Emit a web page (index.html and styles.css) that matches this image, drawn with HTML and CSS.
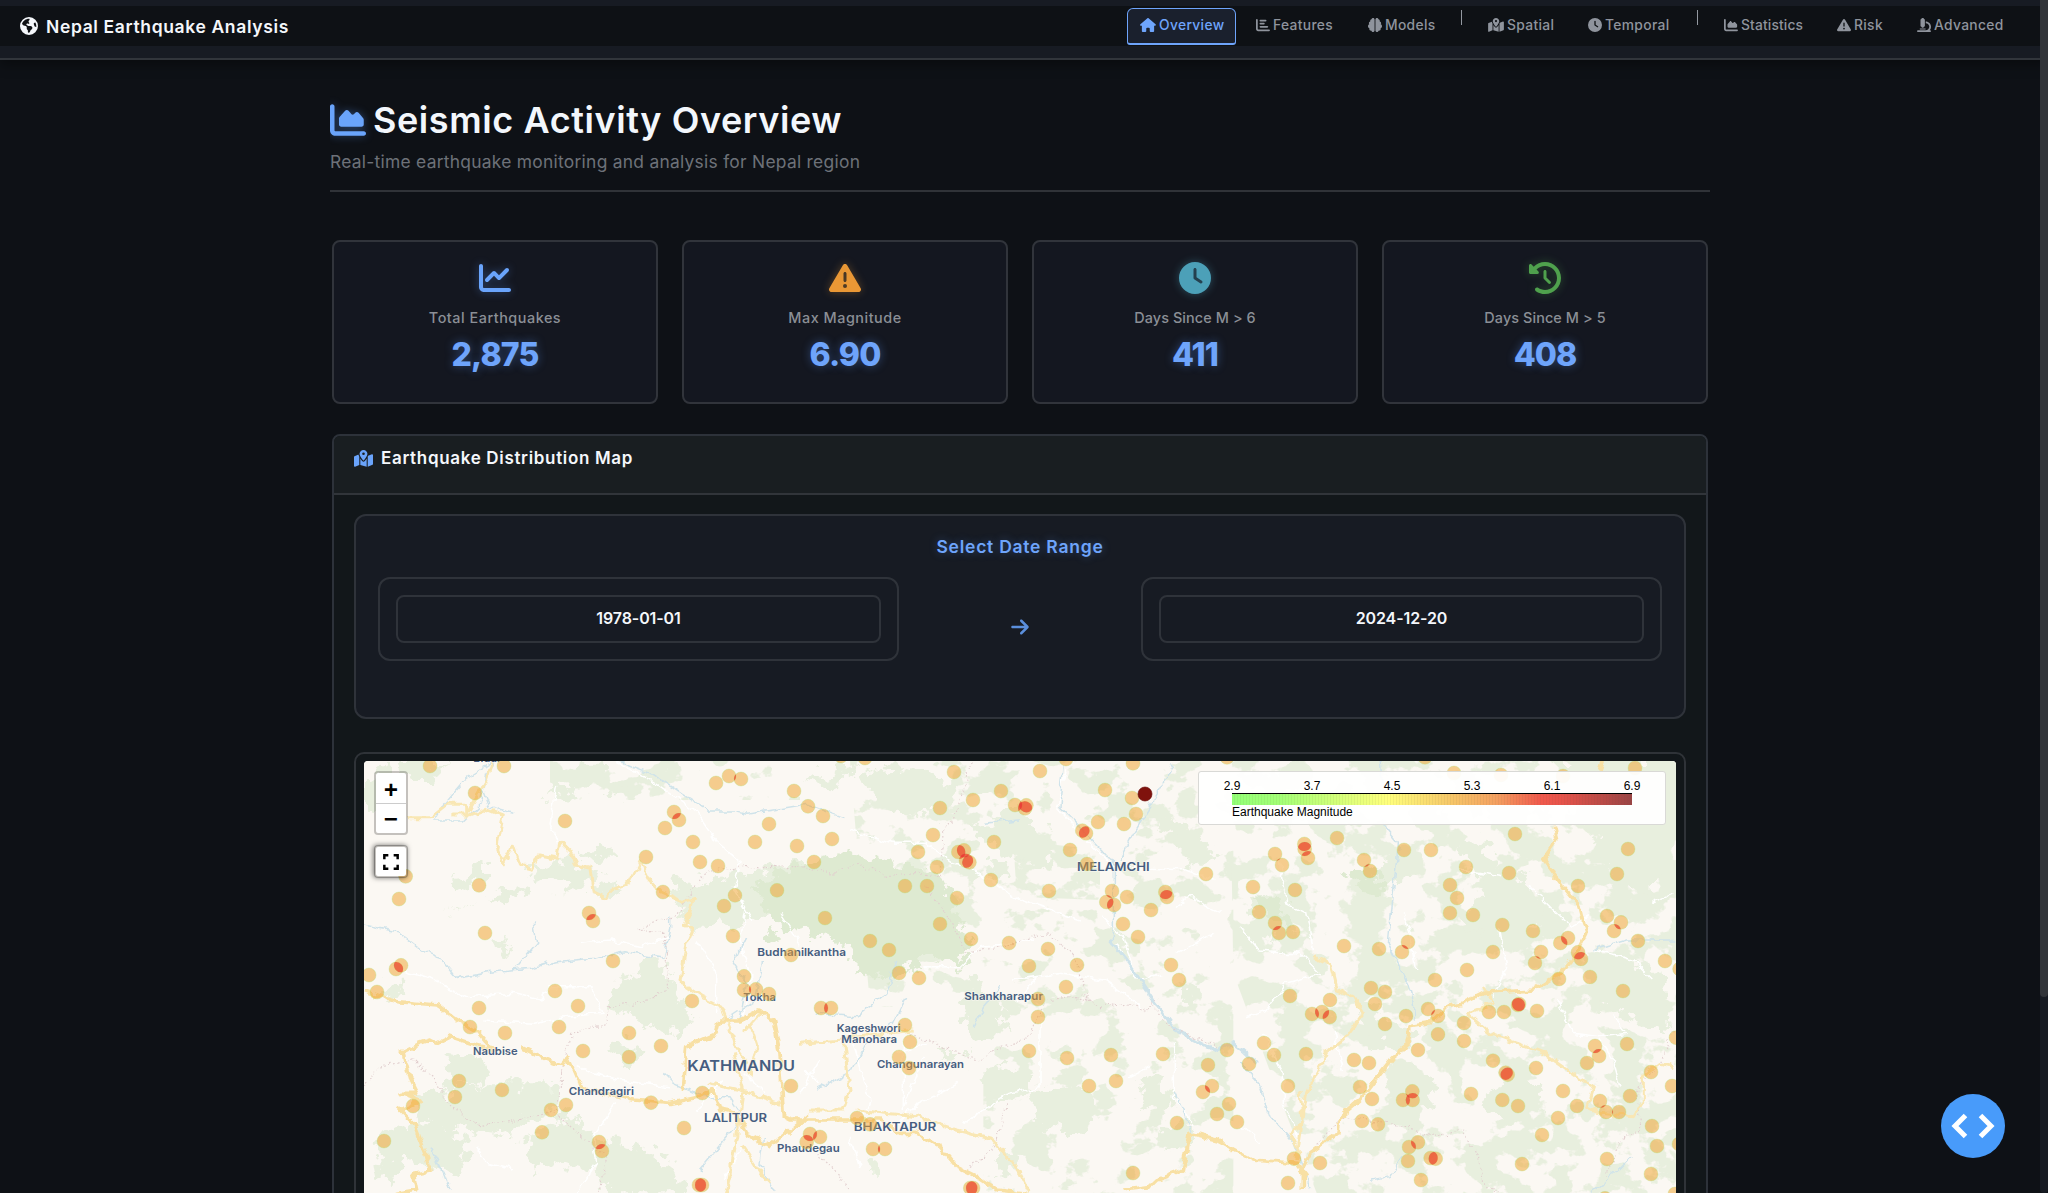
FILE: index.html
```html
<!DOCTYPE html>
<html lang="en">
<head>
<meta charset="utf-8">
<title>Nepal Earthquake Analysis</title>
<link rel="stylesheet" href="styles.css">
</head>
<body>
<svg class="sprite" aria-hidden="true">
  <symbol id="i-earth" viewBox="0 0 512 512"><path d="M57.7 193l9.4 16.4c8.3 14.5 21.9 25.2 38 29.8L163 255.7c17.2 4.9 29 20.6 29 38.5v39.9c0 11 6.2 21 16 25.9s16 14.9 16 25.9v39c0 15.6 14.9 26.9 29.9 22.6c16.1-4.6 28.6-17.5 32.7-33.8l2.8-11.2c4.2-16.9 15.2-31.4 30.3-40l8.1-4.6c15-8.5 24.2-24.5 24.2-41.7v-8.3c0-12.7-5.1-24.9-14.1-33.9l-3.9-3.9c-9-9-21.2-14.1-33.9-14.1H257c-11.1 0-22.1-2.9-31.8-8.4l-34.5-19.7c-4.3-2.5-7.6-6.5-9.2-11.2c-3.2-9.6 1.1-20 10.2-24.5l5.9-3c6.6-3.3 14.3-3.9 21.3-1.5l23.2 7.7c8.2 2.7 17.2-.4 21.9-7.5c4.7-7 4.2-16.3-1.2-22.8l-13.6-16.3c-10-12-9.9-29.5 .3-41.3l15.7-18.3c8.8-10.3 10.2-25 3.5-36.7l-2.4-4.2c-3.5-.2-6.9-.3-10.4-.3C163.1 48 84.4 108.9 57.7 193zM464 256c0-36.8-9.6-71.4-26.4-101.5L412 164.8c-15.7 6.3-23.8 23.8-18.5 39.8l16.9 50.7c3.5 10.4 12 18.3 22.6 20.9l29.1 7.3c1.2-9 1.8-18.2 1.8-27.5zM0 256a256 256 0 1 1 512 0A256 256 0 1 1 0 256z"/></symbol>
  <symbol id="i-house" viewBox="0 0 576 512"><path d="M575.8 255.5c0 18-15 32.1-32 32.1l-32 0 .7 160.2c0 2.7-.2 5.4-.5 8.1l0 16.2c0 22.1-17.9 40-40 40l-16 0c-1.1 0-2.2 0-3.3-.1c-1.4 .1-2.8 .1-4.2 .1L416 512l-24 0c-22.1 0-40-17.9-40-40l0-24 0-64c0-17.7-14.3-32-32-32l-64 0c-17.7 0-32 14.3-32 32l0 64 0 24c0 22.1-17.9 40-40 40l-24 0-31.9 0c-1.5 0-3-.1-4.5-.2c-1.2 .1-2.4 .2-3.6 .2l-16 0c-22.1 0-40-17.9-40-40l0-112c0-.9 0-1.9 .1-2.8l0-69.7-32 0c-18 0-32-14-32-32.1c0-9 3-17 10-24L266.4 8c7-7 15-8 22-8s15 2 21 7L564.8 231.5c8 7 12 15 11 24z"/></symbol>
  <symbol id="i-bar" viewBox="0 0 512 512"><path d="M32 32c17.7 0 32 14.3 32 32V400c0 8.8 7.2 16 16 16H480c17.7 0 32 14.3 32 32s-14.3 32-32 32H80c-44.2 0-80-35.8-80-80V64C0 46.3 14.3 32 32 32zm96 64c0-17.7 14.3-32 32-32l192 0c17.7 0 32 14.3 32 32s-14.3 32-32 32H160c-17.7 0-32-14.3-32-32zm32 80H288c17.7 0 32 14.3 32 32s-14.3 32-32 32H160c-17.7 0-32-14.3-32-32s14.3-32 32-32zm0 112H416c17.7 0 32 14.3 32 32s-14.3 32-32 32H160c-17.7 0-32-14.3-32-32s14.3-32 32-32z"/></symbol>
  <symbol id="i-brain" viewBox="0 0 512 512"><path d="M184 0c30.9 0 56 25.1 56 56V456c0 30.9-25.1 56-56 56c-28.9 0-52.7-21.9-55.7-50.1c-5.2 1.4-10.7 2.1-16.3 2.1c-35.3 0-64-28.7-64-64c0-7.4 1.3-14.6 3.6-21.2C21.4 367.4 0 338.2 0 304c0-31.9 18.7-59.5 45.8-72.3C37.1 220.8 32 207 32 192c0-30.7 21.6-56.3 50.4-62.6C80.8 123.9 80 118 80 112c0-29.9 20.6-55.1 48.3-62.1C131.3 21.9 155.1 0 184 0zM328 0c28.9 0 52.6 21.9 55.7 49.9c27.8 7 48.3 32.1 48.3 62.1c0 6-.8 11.9-2.4 17.4c28.8 6.2 50.4 31.9 50.4 62.6c0 15-5.1 28.8-13.8 39.7C493.3 244.5 512 272.1 512 304c0 34.2-21.4 63.4-51.6 74.8c2.3 6.6 3.6 13.8 3.6 21.2c0 35.3-28.7 64-64 64c-5.6 0-11.1-.7-16.3-2.1c-3 28.2-26.8 50.1-55.7 50.1c-30.9 0-56-25.1-56-56V56c0-30.9 25.1-56 56-56z"/></symbol>
  <symbol id="i-map" viewBox="0 0 576 512"><path d="M408 120c0 54.6-73.1 151.9-105.2 192c-7.7 9.6-22 9.6-29.6 0C241.1 271.9 168 174.6 168 120C168 53.7 221.7 0 288 0s120 53.7 120 120zm8 80.4c3.5-6.9 6.7-13.8 9.6-20.6c.5-1.2 1-2.5 1.5-3.7l116-46.4C558.9 123.4 576 135 576 152V422.8c0 9.8-6 18.6-15.1 22.3L416 503V200.4zM137.6 138.3c2.4 14.1 7.2 28.3 12.8 41.5c2.9 6.8 6.1 13.7 9.6 20.6V451.8L32.9 502.7C17.1 509 0 497.4 0 480.4V209.6c0-9.8 6-18.6 15.1-22.3l122.6-49zM327.8 332c13.9-17.4 35.7-45.7 56.2-77V504.3L192 449.4V255c20.5 31.3 42.3 59.6 56.2 77c20.5 25.6 59.1 25.6 79.6 0zM288 152a40 40 0 1 0 0-80 40 40 0 1 0 0 80z"/></symbol>
  <symbol id="i-clock" viewBox="0 0 512 512"><path d="M256 0a256 256 0 1 1 0 512A256 256 0 1 1 256 0zM232 120V256c0 8 4 15.5 10.7 20l96 64c11 7.4 25.9 4.4 33.3-6.7s4.4-25.9-6.7-33.3L280 243.2V120c0-13.3-10.7-24-24-24s-24 10.7-24 24z"/></symbol>
  <symbol id="i-area" viewBox="0 0 512 512"><path d="M64 64c0-17.7-14.3-32-32-32S0 46.3 0 64L0 400c0 44.2 35.8 80 80 80l400 0c17.7 0 32-14.3 32-32s-14.3-32-32-32L80 416c-8.8 0-16-7.2-16-16L64 64zm96 288H448c17.7 0 32-14.3 32-32V251.8c0-7.6-2.7-15-7.7-20.8l-65.8-76.8c-12.1-14.2-33.7-15-46.9-1.8l-21 21c-10 10-26.4 9.2-35.4-1.6l-39.2-47c-12.6-15.1-35.7-15.4-48.7-.6L135.9 215c-5.1 5.8-7.9 13.3-7.9 21.1v84c0 17.7 14.3 32 32 32z"/></symbol>
  <symbol id="i-warn" viewBox="0 0 512 512"><path d="M256 32c14.2 0 27.3 7.5 34.5 19.8l216 368c7.3 12.4 7.3 27.7 .2 40.1S486.3 480 472 480H40c-14.3 0-27.6-7.7-34.7-20.1s-7-27.8 .2-40.1l216-368C228.7 39.5 241.8 32 256 32zm0 128c-13.3 0-24 10.7-24 24V296c0 13.3 10.7 24 24 24s24-10.7 24-24V184c0-13.3-10.7-24-24-24zm32 224a32 32 0 1 0 -64 0 32 32 0 1 0 64 0z"/></symbol>
  <symbol id="i-scope" viewBox="0 0 512 512"><path d="M160 32c0-17.7 14.3-32 32-32h32c17.7 0 32 14.3 32 32c17.7 0 32 14.3 32 32V288c0 17.7-14.3 32-32 32c0 17.7-14.3 32-32 32H192c-17.7 0-32-14.3-32-32c-17.7 0-32-14.3-32-32V64c0-17.7 14.3-32 32-32zM32 448H320c70.7 0 128-57.3 128-128s-57.3-128-128-128V128c106 0 192 86 192 192c0 49.2-18.5 94-48.9 128H480c17.7 0 32 14.3 32 32s-14.3 32-32 32H320 32c-17.7 0-32-14.3-32-32s14.3-32 32-32zm80-64H304c8.8 0 16 7.2 16 16s-7.2 16-16 16H112c-8.8 0-16-7.2-16-16s7.2-16 16-16z"/></symbol>
  <symbol id="i-line" viewBox="0 0 512 512"><path d="M64 64c0-17.7-14.3-32-32-32S0 46.3 0 64V400c0 44.2 35.8 80 80 80H480c17.7 0 32-14.3 32-32s-14.3-32-32-32H80c-8.8 0-16-7.2-16-16V64zm406.6 86.6c12.5-12.5 12.5-32.8 0-45.3s-32.8-12.5-45.3 0L320 210.7l-57.4-57.4c-12.5-12.5-32.8-12.5-45.3 0l-112 112c-12.5 12.5-12.5 32.8 0 45.3s32.8 12.5 45.3 0L240 221.3l57.4 57.4c12.5 12.5 32.8 12.5 45.3 0l128-128z"/></symbol>
  <symbol id="i-history" viewBox="0 0 512 512"><path d="M75 75L41 41C25.9 25.9 0 36.6 0 57.9V168c0 13.3 10.7 24 24 24H134.1c21.4 0 32.1-25.9 17-41l-30.8-30.8C155 85.5 203 64 256 64c106 0 192 86 192 192s-86 192-192 192c-40.8 0-78.6-12.7-109.7-34.4c-14.5-10.1-34.4-6.6-44.6 7.9s-6.6 34.4 7.9 44.6C151.2 495 201.7 512 256 512c141.4 0 256-114.6 256-256S397.4 0 256 0C185.3 0 121.3 28.7 75 75zm181 53c-13.3 0-24 10.7-24 24V256c0 6.4 2.5 12.5 7 17l72 72c9.4 9.4 24.6 9.4 33.9 0s9.4-24.6 0-33.9l-65-65V152c0-13.3-10.7-24-24-24z"/></symbol>
  <symbol id="i-arrow" viewBox="0 0 448 512"><path d="M438.6 278.6c12.5-12.5 12.5-32.8 0-45.3l-160-160c-12.5-12.5-32.8-12.5-45.3 0s-12.5 32.8 0 45.3L338.8 224 32 224c-17.7 0-32 14.3-32 32s14.3 32 32 32l306.7 0L233.4 393.4c-12.5 12.5-12.5 32.8 0 45.3s32.8 12.5 45.3 0l160-160z"/></symbol>
</svg>

<header class="topbar">
  <div class="topbar-row">
    <div class="brand"><svg class="ic"><use href="#i-earth"/></svg><span>Nepal Earthquake Analysis</span></div>
    <nav class="menu">
      <a class="item active w-overview"><svg class="ic wide"><use href="#i-house"/></svg>Overview</a>
      <a class="item w-features"><svg class="ic"><use href="#i-bar"/></svg>Features</a>
      <a class="item w-models"><svg class="ic"><use href="#i-brain"/></svg>Models</a>
      <span class="sep"></span>
      <a class="item w-spatial"><svg class="ic wide"><use href="#i-map"/></svg>Spatial</a>
      <a class="item w-temporal"><svg class="ic"><use href="#i-clock"/></svg>Temporal</a>
      <span class="sep"></span>
      <a class="item w-statistics"><svg class="ic"><use href="#i-area"/></svg>Statistics</a>
      <a class="item w-risk"><svg class="ic"><use href="#i-warn"/></svg>Risk</a>
      <a class="item w-advanced"><svg class="ic"><use href="#i-scope"/></svg>Advanced</a>
    </nav>
  </div>
</header>

<main class="page">
  <section class="heading">
    <h1><svg class="ic"><use href="#i-area"/></svg>Seismic Activity Overview</h1>
    <p>Real-time earthquake monitoring and analysis for Nepal region</p>
  </section>

  <section class="stats">
    <article class="stat"><svg class="ic blue"><use href="#i-line"/></svg><h2>Total Earthquakes</h2><strong>2,875</strong></article>
    <article class="stat"><svg class="ic orange"><use href="#i-warn"/></svg><h2>Max Magnitude</h2><strong>6.90</strong></article>
    <article class="stat"><svg class="ic teal"><use href="#i-clock"/></svg><h2 class="tight">Days Since M &gt; 6</h2><strong>411</strong></article>
    <article class="stat"><svg class="ic green"><use href="#i-history"/></svg><h2 class="tight">Days Since M &gt; 5</h2><strong>408</strong></article>
  </section>

  <section class="panel">
    <h3 class="panel-head"><svg class="ic"><use href="#i-map"/></svg>Earthquake Distribution Map</h3>
    <div class="panel-body">
      <div class="range">
        <h4>Select Date Range</h4>
        <div class="range-row">
          <div class="date-wrap"><div class="date">1978-01-01</div></div>
          <svg class="ic arrow"><use href="#i-arrow"/></svg>
          <div class="date-wrap"><div class="date">2024-12-20</div></div>
        </div>
      </div>
      <div class="map-frame">
        <div class="map">
          <svg class="tiles" viewBox="42 63 3936 1296" preserveAspectRatio="xMinYMin slice">
            <defs>
              <filter id="rough" filterUnits="userSpaceOnUse" x="-60" y="-40" width="4140" height="1500" color-interpolation-filters="sRGB">
                <feTurbulence type="fractalNoise" baseFrequency="0.022" numOctaves="4" seed="4"/>
                <feDisplacementMap in="SourceGraphic" scale="95" xChannelSelector="R" yChannelSelector="G"/>
              </filter>
              <filter id="wiggle" filterUnits="userSpaceOnUse" x="-60" y="-40" width="4140" height="1500" color-interpolation-filters="sRGB">
                <feTurbulence type="fractalNoise" baseFrequency="0.035" numOctaves="2" seed="9"/>
                <feDisplacementMap in="SourceGraphic" scale="26" xChannelSelector="R" yChannelSelector="G"/>
              </filter>
              <filter id="woodDense" filterUnits="userSpaceOnUse" x="42" y="63" width="3939" height="1296" color-interpolation-filters="sRGB">
                <feTurbulence type="fractalNoise" baseFrequency="0.009 0.011" numOctaves="5" seed="21" result="n"/>
                <feColorMatrix type="matrix" values="0 0 0 0 .91  0 0 0 0 .937  0 0 0 0 .871  0 0 0 24 -11.9"/>
                <feComposite in2="SourceGraphic" operator="in"/>
              </filter>
              <filter id="woodSparse" filterUnits="userSpaceOnUse" x="42" y="63" width="3939" height="1296" color-interpolation-filters="sRGB">
                <feTurbulence type="fractalNoise" baseFrequency="0.009 0.012" numOctaves="5" seed="7" result="n"/>
                <feColorMatrix type="matrix" values="0 0 0 0 .91  0 0 0 0 .937  0 0 0 0 .871  0 0 0 24 -13.7"/>
                <feComposite in2="SourceGraphic" operator="in"/>
              </filter>
            </defs>
            <rect x="42" y="63" width="3939" height="1296" fill="#fbf8f3"/>
            <!-- scattered woodland -->
            <path filter="url(#woodSparse)" d="M1500 63H2650V1359H1900V800H1560ZM600 63H1350V180H600Z"/>
            <path filter="url(#woodDense)" d="M2640 63H3981V1359H2900L2800 1100L2650 700ZM1990 300L2250 330V480L2000 470Z"/>
            <!-- woodland -->
            <g fill="#e8efde" filter="url(#rough)">
              <path d="M170 63h130l-60 60h-80zM42 110l60-40 20 50-50 80-30 20zM690 80l60 0 60 50 40 50-60-20-80-40-60-10zM690 170l-110 10 60-50zM300 420l80-30 40-20 0 50-100 30zM290 510l100-25-60 20zM420 465l80-30 40 20-60 30zM510 385l130-25 130 40-90 45-90-10zM700 340l100-15 0 25-90 10zM720 460l90-30 0 30-60 20zM430 610l30 0 5 20-30 5z"/>
              <path d="M960 430l190-20 200-40v130l-230 60-100 10-30-80zM820 720l100-60 40 40 20 50 60 90-40 40-80-20-80-30-60-40zM780 930l60-20 50 30-50 40zM90 740l60 0 10 30-60 10zM290 950l90-20 40 70-20 30-110 10zM200 1080l120-40 100-10 190 0v90l-160 60-220-20zM80 1180l160-40 120 60-40 100-160-40-60 90zM520 1200l140-80 100 80 120 20 80 60 60 80-220 0-60-60-120-40-60 40z"/>
              <path d="M1350 380l110-40 180 40 80 50-40 60-330 30zM1550 90l160-10 120 70-60 80-100-10-130-50zM1370 110l160-30-80 70zM1870 260l130-60 60 60 60 60-40 60-120-40zM1900 370l90 0-10 40-80-10zM1870 860l70-40 40 60-90 20zM1870 1000l110-20 60 30 0 60-100 10zM2040 1060l140-30 80 60-60 90-130-10zM2360 1050l60-30 60 70-60 30zM2440 1160l80-10 0 60-70 20zM2500 700l40 60-20 60-30-50zM2420 220l120 60 60 60-60 40-60-60zM1740 930l110 0-50 30zM1850 710l60 40 60 80-80 60-60-50zM1930 1230l70 0 0 60-60 20zM1560 1250l40 60-50 0z"/>
              <path d="M3330 300l60-10 60 100 80 20 40 100-30 70-140 30-60-60 50-90zM3620 63h340l0 330-80 80-110-90-70-160-80-60zM3700 640l240 60 20 180-120-40-110-60zM3100 980l90 0 70 60 0 80-110-10zM3030 790l80 40 90 60-30 40-110-10zM3470 1020l90 0 20 90-110 30-90-50zM3080 390l90-60 20 90-110 20zM2700 470l80 0 70 80-30 60-100-30z"/>
            </g>
            <!-- Shivapuri national park -->
            <g fill="#deead1" filter="url(#rough)">
              <path d="M1220 430l70-30 160-60 140 20 140 20 60 60 60 130 20 40-40 70-100-30-100 70-110-20-10-70-90-40-120-30-60-50zM1230 590l50-20 0 40-40 10zM2990 410l80-20 60 30-40 50-60-10zM2720 480l60 0 60 70-40 10z"/>
            </g>
            <!-- minor roads -->
            <g fill="none" stroke="#fff" stroke-width="4.5" filter="url(#wiggle)">
              <path d="M800 65l110 60 130 90 60 90 70 60-20 80 60 100M620 140l-20 110 20 60M690 610l90-10 90 20 90-30M160 690l70 20 120 60 140-10 80 20 30-40 120 0 40 80M400 840l150 10 90-20 120-10M680 980l120 40 160 20M800 1090l-70 100 10 80-60 90M380 1220l30 50 80 20M1040 600l60 100 0 120M1190 500l-20 100 40 140-40 110M1290 520l60 90M1500 270l120 40 110 0 80 60 60 20 140 90 180 60M1980 720l160-20 120 20 110 80M1720 680l110 0 60-60 160-20M2000 790l60-80M2070 840l0 200-90 20-140 90M1640 940l90-30M2150 90l-30 110 80 90 90 90 220 10 80 30M2480 500l40-30 90 50M2260 530l60 60 40 130-60-110M2480 640l110-60M2470 910l0 160 60 80M2340 1010l60-30M2440 700l-80 20"/>
              <path d="M2790 360l20 130 60 30 20 110M2670 560l60 70 120 10 60 60-100 30-60 80-60 20M2950 870l30 120M3160 520l30 110 10 60M3450 570l20 110-40 90M3540 440l60 60 60 60 60-30M3620 780l50 100 80 10 80-10-40-50M3730 630l120 30 60 60M3900 490l70-30M3750 900l40 60 20 80M2670 1150l60 60M2740 880l60 120 0 90 50 110M3330 390l120 20"/>
              <path d="M1410 960l-60 100M1360 990l50 40M1500 880l60 200-20 50M1660 900l0 210M1720 950l-60 150M1180 1000l60 60M1120 1020l-80 90M1820 1030l-120 60-80 90M1500 1190l30 100M1180 1220l-60 100"/>
            </g>
            <!-- rivers -->
            <g fill="none" stroke="#cfe3ea" stroke-width="4.5" filter="url(#wiggle)">
              <path d="M430 63l-90 60-60 70-30 50 90 0 50-50 20-90 30-40M400 150l20 50 70 20M42 555l100 20 80 60 50 20 50 60 110-20 110-10 70-20 120-10 90-20 120 20 20-90 0-40M550 550l10 60-60 70M810 63l100 40 90 60 80 50 70 0 40 10 180-30 110 40M1190 590l-40 80 40 60-20 110M1240 660l-20 120-90 60M940 1000l30 30 90 40 80 0 40 60-30 40-100 120M1240 1190l-10 80 40 80M240 1220l40 80 20 50"/>
              <path d="M1640 660l-30 100-90 70-120-10M1670 770l-40 80-80 60-40 80-110 60M1950 740l-50 60-30 60M2010 240l-110 10M2140 70l-10 130 60 60 80 90 20 10 0 250M2470 70l-60 110-60 100-40 80M3090 63l10 80M3095 250l50 60-20 200-10 100 70 140 10 90M3730 630l100-30 140 0M2670 965l60 70 30 90 70 80 50 140M3720 1359l80-60 50-50M3160 1250l-40 60-60 10M2470 1050l60 130"/>
              <path stroke-width="9" d="M2280 600l70 90 60 90 70 90 110 60 60-20 70 60"/>
            </g>
            <!-- district borders -->
            <g fill="none" stroke="#e2cfcf" stroke-width="3.5" stroke-dasharray="5 7" filter="url(#wiggle)">
              <path d="M42 1040l40-60 110-20 60 60 50 80 90 60 110-20 120-30 20-140 20-90 110-30 0-50 100-10 80-40 0-120-10-50-80-10 60-30 60-10 30-60 70-80 100-10 160 0 110 20 70-30 90 40 90-10 70 10 10-130 60-120 30-140M1730 440l80 110 40 90 100-20 150-40 70 70 50 130-60-10-70 10-60 120-80 20-60 40-60-20-60-20-90-40M2190 760l60 40 80-10 60 20 30-30M2410 800l50 60 140 60M610 1120l160 130-20 110M1400 1240l60 60 40 50M1970 1090l-40 140-80 60M2900 1210l80-80 150 20 120 40 90-20 50 90 0 50 60 60M3970 870l-40 100-70 80 10 120-60 30-40 110"/>
            </g>
            <!-- main roads -->
            <g fill="none" stroke-linejoin="round" filter="url(#wiggle)">
              <g stroke="#f9e7b4" stroke-width="9">
                <path d="M430 63l-20 60-60 100 0-30-60 0-50 40-70 0M310 225l50 0 50-20 50 20-20 100 20 50 30-60 20 60 40 10 20-40 50 10 10-50 30 30 20 40 40 10 10 70 40 20 20-30 50-20 30-60 30 60 30 30 70 30 30-10-10 40-20 40 30 10-20 50-10 50-10 60 60 40 60 30 30 70 20 60 30 40M1180 880l60-70M1200 860l20 60-20 90M1070 1030l100 20 120 40M1150 940l30 110-20 140-30 170M1180 1220l60 90 20 20M1350 910l130-10 20 150-20 60-100 0M1490 890l120-10 80-10-30 0M1520 1110l180 20 120 40 110 30 80 100 30 60M1140 1260l0 50-20 60"/>
                <path d="M2890 650l50 20 20 80 50 20 30 50-60 80-50 40-30 60-30 60-20 130-10 70M2850 1050l10 100-40 30 30 60M3400 740l30 50-80 30 70 60 80 30 80 30 100 70 50 30-20 60 40 20 100 10 30-50 0-70 50-40 40 10"/>
              </g>
              <g stroke="#f8e0a4" stroke-width="11">
                <path d="M42 755l60 20 40 10 120 10 50 40 70 40 50 60M150 940l60-30 30-10 20 10 40-20 60 20 80 20M510 920l80 40 50 20 10-30 30 70 40 30 130 30 110 10 90-20 40-20 20 60 50 10 30 60 70 40 120-100M160 940l20 80 20 40-50 0 60 20-60 30 40 40 40 100 10 40-50 10 10 50-60 10-20 30M1000 1050l10-130 90-40 10-40 60 0 60-30 40 30 20 100 10 190 20 10 160 0 110 0 60 40 50 0 70 40 50 60 60 30 60 40 90 10M2320 1350l80-10 20-20 80-30 20-110 80 20 110 60 130 10 30 40"/>
                <path d="M3760 63l-10 30M3610 260l10 40-40 60 60 80 50 60 20 80-30 60-50 60-80 50-150 10-60 30-50 10-50 50-60 10-10 60-40 30-40 50-60 80-60 50-10 50-80 60-20 40 0 70"/>
              </g>
            </g>
            <g class="place">
              <text x="370" y="66" font-size="32" textLength="84" lengthAdjust="spacingAndGlyphs">Bidur</text>
              <text x="369" y="945" font-size="32" textLength="134" lengthAdjust="spacingAndGlyphs">Naubise</text>
              <text x="656" y="1065" font-size="32" textLength="196" lengthAdjust="spacingAndGlyphs">Chandragiri</text>
              <text x="1222" y="648" font-size="32" textLength="266" lengthAdjust="spacingAndGlyphs">Budhanilkantha</text>
              <text x="1180" y="782" font-size="32" textLength="98" lengthAdjust="spacingAndGlyphs">Tokha</text>
              <text x="1012" y="992" font-size="45" textLength="323" lengthAdjust="spacingAndGlyphs">KATHMANDU</text>
              <text x="1062" y="1145" font-size="37" textLength="189" lengthAdjust="spacingAndGlyphs">LALITPUR</text>
              <text x="1281" y="1237" font-size="32" textLength="188" lengthAdjust="spacingAndGlyphs">Phaudegau</text>
              <text x="2181" y="393" font-size="37" textLength="218" lengthAdjust="spacingAndGlyphs">MELAMCHI</text>
              <text x="1843" y="781" font-size="32" textLength="236" lengthAdjust="spacingAndGlyphs">Shankharapur</text>
              <text x="1460" y="875" font-size="32" textLength="192" lengthAdjust="spacingAndGlyphs">Kageshwori</text>
              <text x="1474" y="909" font-size="32" textLength="167" lengthAdjust="spacingAndGlyphs">Manohara</text>
              <text x="1581" y="984" font-size="32" textLength="261" lengthAdjust="spacingAndGlyphs">Changunarayan</text>
              <text x="1511" y="1172" font-size="37" textLength="248" lengthAdjust="spacingAndGlyphs">BHAKTAPUR</text>
            </g>
            <g id="quakes"></g>
          </svg>
          <div class="zoom-ctl"><b>+</b><b>−</b></div>
          <div class="full-ctl"><svg viewBox="0 0 18 18"><path d="M1.500 6V1.500H6M12 1.500h4.500V6M16.500 12v4.500H12M6 16.500H1.500V12"/></svg></div>
          <div class="legend">
            <div class="ticks"><span>2.9</span><span>3.7</span><span>4.5</span><span>5.3</span><span>6.1</span><span>6.9</span></div>
            <div class="ramp"></div>
            <div class="caption">Earthquake Magnitude</div>
          </div>
        </div>
      </div>
    </div>
  </section>
</main>

<div class="scroll"><i></i></div>
<div class="fab"><svg viewBox="0 0 64 64"><path d="M24.500 21.500L14 32l10.500 10.500M39.500 21.500L50 32L39.500 42.500"/></svg></div>
<script src="quakes.js"></script>
</body>
</html>
```
FILE: styles.css
```css
* { box-sizing: border-box; margin: 0; padding: 0; }
html, body { height: 1193px; overflow: hidden; }
body { background: #0e1116; color: #f4f7fb; font-family: "Inter", "Open Sans", sans-serif; display: flex; flex-direction: column; }
.sprite { position: absolute; width: 0; height: 0; }
.ic { width: 1em; height: 1em; fill: currentColor; flex: none; }

.topbar { flex: none; height: 60px; padding: 6px 8px 0 0; background: #171b23; border-bottom: 2px solid #31353b; box-shadow: 0 4px 12px rgba(0,0,0,.4); }
.topbar-row { height: 40px; background: #0e1115; display: flex; justify-content: space-between; padding: 0 24px 0 20px; }
.brand { display: flex; align-items: center; gap: 8px; font-size: 17.500px; font-weight: 600; letter-spacing: .64px; }
.brand .ic { width: 18px; height: 18px; }
.menu { display: flex; padding-top: 2px; }
.item { height: 37px; display: flex; align-items: center; gap: 3px; padding-left: 12px; padding-bottom: 3px; border: 1px solid transparent; font-size: 13.800px; font-weight: 500; letter-spacing: .35px; color: #8f949d; white-space: nowrap; }
.item .ic { width: 14px; height: 14px; }
.item .ic.wide { width: 16px; }
.item.active { color: #6ea4fb; background: #1a202d; border-color: #6ea4fb; border-bottom-width: 2px; border-radius: 6px 6px 3px 3px; padding-bottom: 2px; }
.w-overview { width: 109px; margin-right: 7px; }
.w-features { width: 104px; margin-right: 8px; }
.w-models { width: 92px; }
.w-spatial { width: 91px; margin-right: 9px; }
.w-temporal { width: 108px; }
.w-statistics { width: 105px; margin-right: 8px; letter-spacing: .15px; }
.w-risk { width: 72px; margin-right: 8px; }
.w-advanced { width: 112px; }
.sep { width: 1px; height: 15px; margin: 2px 13.500px 0; background: #9398a0; }

.page { flex: 1; min-height: 0; width: 1380px; margin-left: 330px; overflow: hidden; }
.heading { height: 132px; padding-top: 34px; border-bottom: 2px solid #303338; }
.heading h1 { display: flex; align-items: center; gap: 7px; height: 52px; font-size: 36px; font-weight: 600; letter-spacing: .58px; color: #f3f7fc; }
.heading h1 .ic { color: #6aa4fb; filter: drop-shadow(0 0 4px rgba(90,150,250,.4)); }
.heading p { line-height: 24px; margin-top: 4px; font-size: 17.400px; letter-spacing: .27px; color: #6d7179; }

.stats { margin: 48px 2px 30px; display: grid; grid-template-columns: repeat(4, 1fr); gap: 24px; }
.stat { height: 164px; padding-top: 20px; display: flex; flex-direction: column; align-items: center; background: #141720; border: 2px solid #31343b; border-radius: 8px; }
.stat .ic { width: 32px; height: 32px; }
.stat h2 { margin-top: 13px; line-height: 22px; font-size: 14.400px; font-weight: 500; letter-spacing: .52px; color: #8b8f96; }
.stat h2.tight { letter-spacing: .1px; }
.stat strong { margin-top: 6px; line-height: 39px; font-size: 32px; font-weight: 800; letter-spacing: -.9px; color: #6ea4fb; text-shadow: 0 0 10px rgba(90,150,250,.4); }
.blue { color: #6aa4fb; filter: drop-shadow(0 0 4px rgba(90,150,250,.4)); }
.orange { color: #e99735; filter: drop-shadow(0 0 4px rgba(233,151,53,.35)); }
.teal { color: #4ca0b8; filter: drop-shadow(0 0 4px rgba(76,160,184,.4)); }
.green { color: #4fa14d; filter: drop-shadow(0 0 4px rgba(79,161,77,.4)); }

.panel { margin: 0 2px; height: 900px; border: 2px solid #2d323a; border-radius: 8px; background: #12171a; overflow: hidden; }
.panel-head { height: 59px; padding: 11px 0 0 20px; display: flex; align-items: flex-start; gap: 8px; line-height: 22px; font-size: 17px; font-weight: 600; letter-spacing: .67px; background: #191e21; border-bottom: 2px solid #31353a; }
.panel-head .ic { width: 19px; height: 17px; margin-top: 3px; color: #6aa4fb; }
.panel-body { padding: 19px 20px 0; }

.range { height: 205px; padding: 20px 22px 0; border: 2px solid #2f333a; border-radius: 12px; background: #171b23; }
.range h4 { line-height: 22px; text-align: center; font-size: 17.500px; font-weight: 600; letter-spacing: .75px; color: #6ea4fb; text-shadow: 0 0 8px rgba(90,150,250,.35); }
.range-row { margin-top: 19px; display: flex; justify-content: space-between; align-items: center; }
.date-wrap { width: 521px; height: 84px; padding: 16px; border: 2px solid #2f333a; border-radius: 12px; }
.date { height: 48px; line-height: 43px; text-align: center; border: 2px solid #2f333a; border-radius: 8px; font-size: 16px; font-weight: 600; letter-spacing: -.1px; }
.arrow { width: 18px; height: 20px; margin-top: 15px; color: #5b8fdc; }

.map-frame { margin-top: 33px; height: 600px; padding: 7px 8px; border: 2px solid #2f3338; border-radius: 10px; }
.map { position: relative; height: 580px; border-radius: 4px; overflow: hidden; background: #fbf8f3; }
.tiles { display: block; width: 1312px; height: 432px; }
.place text { fill: #465d80; stroke: #fbf8f3; stroke-width: 4px; stroke-opacity: .7; paint-order: stroke; font-family: "Inter", sans-serif; font-weight: 600; }
.quake { fill: #f0a028; fill-opacity: .5; stroke: #b6e67c; stroke-opacity: .4; stroke-width: 2.500px; }
.overlap { fill: #ea3a38; fill-opacity: .62; }
.major { fill: #7f120d; stroke: #6a0a08; stroke-width: 2px; }

.zoom-ctl, .full-ctl { position: absolute; left: 10px; border: 2px solid rgba(0,0,0,.22); border-radius: 4px; background: #fff; background-clip: padding-box; }
.zoom-ctl { top: 10px; width: 34px; height: 64px; }
.zoom-ctl b { display: block; height: 29px; text-align: center; font: bold 24px/34px "Liberation Mono", monospace; color: #000; }
.zoom-ctl b:first-child { height: 31px; line-height: 37px; border-bottom: 1px solid #ccc; }
.full-ctl { top: 84px; width: 34px; height: 33px; box-shadow: -1px 0 5px rgba(0,0,0,.5); display: grid; place-items: center; }
.full-ctl svg { width: 16px; height: 16px; fill: none; stroke: #000; stroke-width: 2.800px; }

.legend { position: absolute; top: 10px; left: 834px; width: 468px; height: 54px; border: 1px solid #d9d9d6; border-radius: 3px; background: rgba(255,255,255,.92); color: #000; font: 12px/14px "Liberation Sans", sans-serif; }
.ticks { display: flex; justify-content: space-between; margin: 7px 0 0 17px; width: 432px; }
.ticks span { width: 32px; text-align: center; }
.ramp { margin: 0 0 0 33px; width: 400px; height: 12px; border-top: 1px solid #000; background: repeating-linear-gradient(90deg, transparent 0 2px, rgba(90,90,60,.07) 2px 3px), linear-gradient(90deg, #93ff76, #a3ff76 12%, #ffff7c 39%, #f6c969 54%, #f4a060 66%, #f0594c 77%, #e8534a 82%, #9a4444); }
.caption { margin: 0 0 0 33px; line-height: 14px; }

.scroll { position: absolute; top: 0; right: 0; width: 8px; height: 1193px; background: #171b23; border-radius: 4px; }
.scroll i { display: block; height: 997px; background: #313439; border-radius: 0 0 4px 4px; }
.fab { position: absolute; left: 1941px; top: 1094px; width: 64px; height: 64px; border-radius: 50%; background: #489bfa; }
.fab svg { fill: none; stroke: #fff; stroke-width: 5px; stroke-linecap: butt; }
```
FILE: quakes.js
```js
// Epicentres as x,y pairs, grouped by map sheet; each sheet has its own x offset.
const sheets = [
  [0, "240,78 462,78 375,159 645,243 167,409 387,436 147,477 405,579 138,687 153,676 57,705 81,756 387,804 360,861 465,879 615,753 684,798 627,861 699,933 837,879 837,951 933,918 903,1088 789,663 717,519 729,543 327,1023 315,1071 456,1050 189,1098 102,1203 648,1095 603,1110 576,1177 747,1206 756,1233 1002,1164 1057,1059 1323,1038 1047,1335 1056,1335 1026,783 1182,709 1182,750 1218,748 1257,762 1323,645 1149,588 1122,498 1155,466 939,456 888,351 1281,451 1050,366 1104,378 1029,306 945,264 972,216 987,240 1098,129 1137,108 1173,117 1257,252 1215,306 1341,318 1332,153"],
  [1350, "24,199 69,228 96,297 42,366 123,48 195,54 462,96 519,180 420,204 399,285 354,336 411,381 315,438 381,438 471,474 420,552 513,597 75,534 210,603 267,630 297,699 357,714 603,153 645,195 675,205 679,196 720,93 798,57 582,306 492,331 475,336 498,362 508,367 573,420 747,453 627,609 744,627 687,678 831,675 798,741 714,777 714,831 63,804 93,804 315,855 330,906 297,951 327,984 687,933 801,954 867,1038 948,1023 933,945 1089,942 1131,1149 999,1299 171,1134 210,1153 30,1182 60,1191 20,1206 219,1227 255,1227 511,1344 519,1344 1113,675 1137,720 1014,591 969,552 1053,510 936,453 919,486 942,495 981,471 1096,456 1101,471 861,372 810,330 847,272 858,280 894,246 972,252 1008,222 996,174 915,150 999,70 1224,975 1236,1038 1209,1056 1287,1092 1251,1122 1311,1146 1218,402 1281,52"],
  [2670, "555,52 642,99 783,105 969,108 1185,84 291,294 193,312 194,327 204,354 105,342 126,375 372,360 390,393 492,330 573,330 678,381 807,399 825,282 1164,327 1131,402 1014,438 630,435 651,474 630,519 699,525 787,555 879,573 759,636 681,690 585,720 39,441 165,450 57,516 105,549 117,579 159,576 312,618 417,627 486,636 504,606 961,609 984,594 903,636 885,669 957,717 1050,711 1014,637 1023,657 1101,528 1143,547 1122,573 1194,603 1275,663 1319,687 1149,753 837,792 834,795 891,813 792,816 747,816 672,849 672,903 594,883 534,930 498,828 564,807 594,828 435,756 393,744 405,792 435,852 150,768 270,780 216,822 246,816 269,831 72,909 102,945 198,942 27,972 -39,930 342,960 387,969 360,1041 396,1077 489,1080 517,1054 518,1080 144,1038 366,1143 414,1153 693,1062 759,962 787,1080 797,998 803,1004 834,1098 888,984 969,1053 1011,1098 954,1134 906,1185 1041,969 1065,918 1077,948 1161,912 1233,996 1296,1038 1308,893 1170,1068 1080,1083 1098,1116 1137,1116 1236,1158 1251,1218 1317,1212 1101,1257 1233,1302 846,1272 534,1207 507,1221 504,1263 543,1320 572,1254 587,1256 162,1256 240,1269 144,1329 1095,1375 1305,1362"]
];
const R = 21;
const pts = sheets.flatMap(([dx, s]) => s.split(" ").map(p => {
  const [x, y] = p.split(",").map(Number);
  return [x + dx, y];
}));
let marks = pts.map(([x, y]) => `<circle class="quake" cx="${x}" cy="${y}" r="${R}"/>`).join("");
pts.forEach(([ax, ay], i) => {
  for (const [bx, by] of pts.slice(i + 1)) {
    const d = Math.hypot(bx - ax, by - ay);
    if (d >= 2 * R || d === 0) continue;
    // lens shared by two equal circles
    const h = Math.sqrt(R * R - d * d / 4);
    const mx = (ax + bx) / 2, my = (ay + by) / 2;
    const ux = -(by - ay) / d * h, uy = (bx - ax) / d * h;
    marks += `<path class="overlap" d="M${mx + ux} ${my + uy}A${R} ${R} 0 0 1 ${mx - ux} ${my - uy}A${R} ${R} 0 0 1 ${mx + ux} ${my + uy}Z"/>`;
  }
});
marks += `<circle class="major" cx="2385" cy="162" r="21"/>`;
document.getElementById("quakes").innerHTML = marks;
```
